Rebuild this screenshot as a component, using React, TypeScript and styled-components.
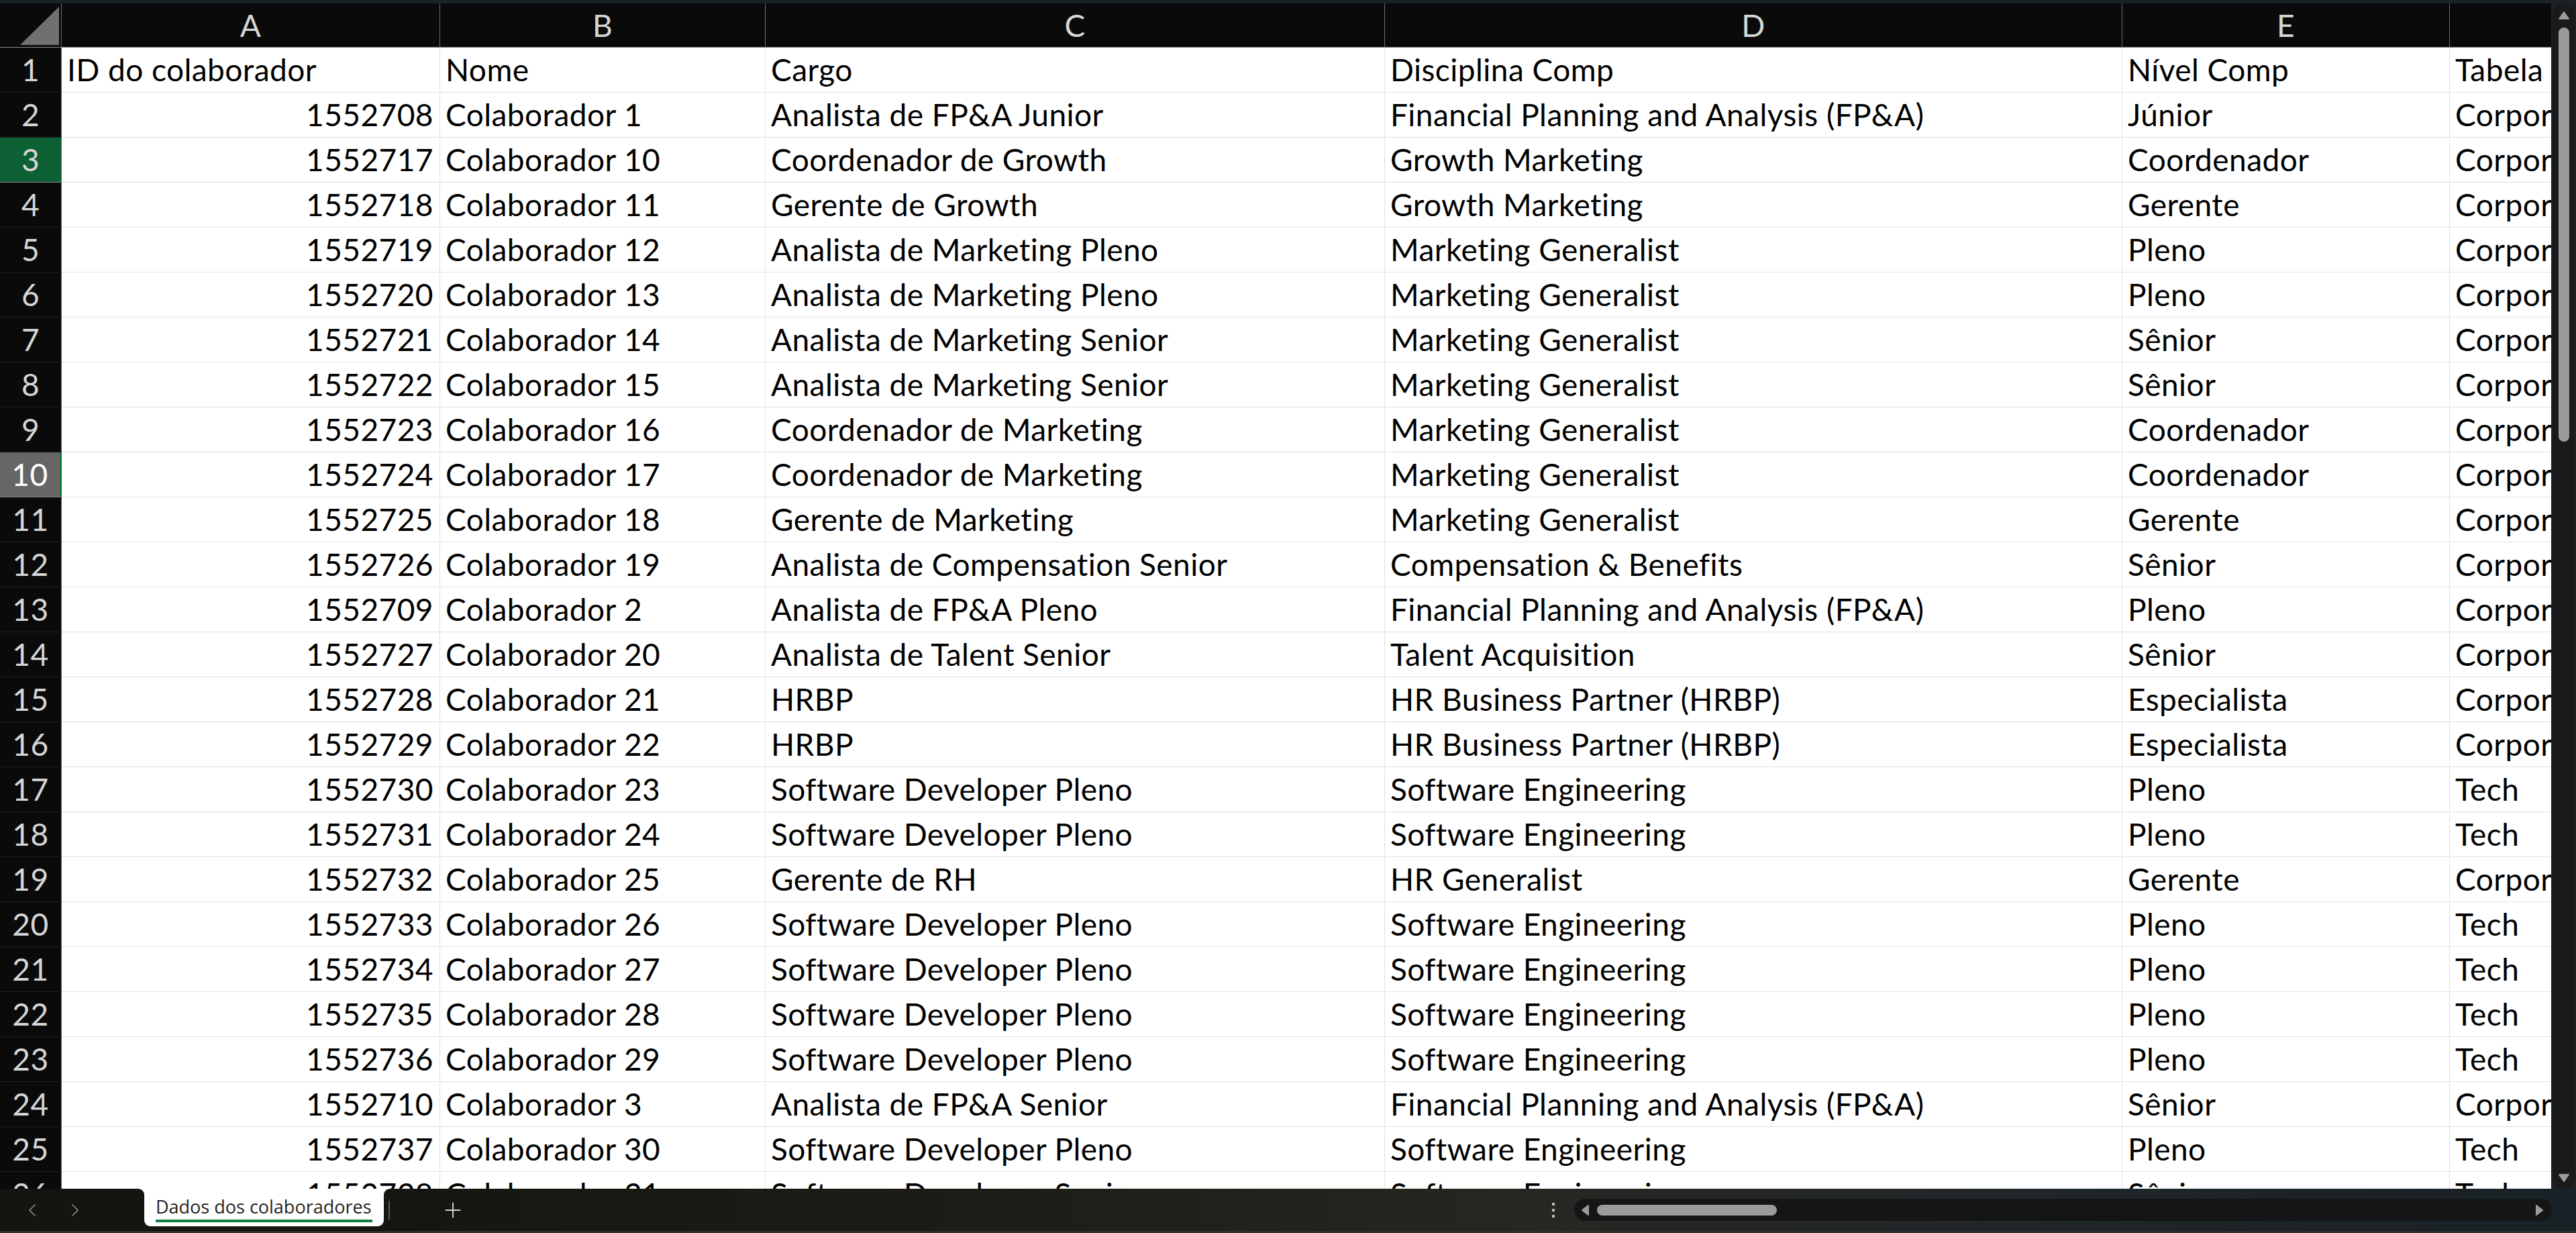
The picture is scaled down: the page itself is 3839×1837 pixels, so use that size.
import React from "react";
import styled, { createGlobalStyle } from "styled-components";
import { ChevronLeft, ChevronRight, Plus } from "lucide-react";

const GlobalStyle = createGlobalStyle`
  html, body {
    margin: 0;
    padding: 0;
    background: #1a2125;
    overflow: hidden;
  }
  #root {
    width: 3839px;
    height: 1837px;
  }
`;

type RowState = "normal" | "active" | "selected";

const COLUMNS = ["A", "B", "C", "D", "E", "F"];

const HEADERS = [
  "ID do colaborador",
  "Nome",
  "Cargo",
  "Disciplina Comp",
  "Nível Comp",
  "Tabela Salarial",
];

const ROWS: string[][] = [
  ["1552708", "Colaborador 1", "Analista de FP&A Junior", "Financial Planning and Analysis (FP&A)", "Júnior", "Corporate"],
  ["1552717", "Colaborador 10", "Coordenador de Growth", "Growth Marketing", "Coordenador", "Corporate"],
  ["1552718", "Colaborador 11", "Gerente de Growth", "Growth Marketing", "Gerente", "Corporate"],
  ["1552719", "Colaborador 12", "Analista de Marketing Pleno", "Marketing Generalist", "Pleno", "Corporate"],
  ["1552720", "Colaborador 13", "Analista de Marketing Pleno", "Marketing Generalist", "Pleno", "Corporate"],
  ["1552721", "Colaborador 14", "Analista de Marketing Senior", "Marketing Generalist", "Sênior", "Corporate"],
  ["1552722", "Colaborador 15", "Analista de Marketing Senior", "Marketing Generalist", "Sênior", "Corporate"],
  ["1552723", "Colaborador 16", "Coordenador de Marketing", "Marketing Generalist", "Coordenador", "Corporate"],
  ["1552724", "Colaborador 17", "Coordenador de Marketing", "Marketing Generalist", "Coordenador", "Corporate"],
  ["1552725", "Colaborador 18", "Gerente de Marketing", "Marketing Generalist", "Gerente", "Corporate"],
  ["1552726", "Colaborador 19", "Analista de Compensation Senior", "Compensation & Benefits", "Sênior", "Corporate"],
  ["1552709", "Colaborador 2", "Analista de FP&A Pleno", "Financial Planning and Analysis (FP&A)", "Pleno", "Corporate"],
  ["1552727", "Colaborador 20", "Analista de Talent Senior", "Talent Acquisition", "Sênior", "Corporate"],
  ["1552728", "Colaborador 21", "HRBP", "HR Business Partner (HRBP)", "Especialista", "Corporate"],
  ["1552729", "Colaborador 22", "HRBP", "HR Business Partner (HRBP)", "Especialista", "Corporate"],
  ["1552730", "Colaborador 23", "Software Developer Pleno", "Software Engineering", "Pleno", "Tech"],
  ["1552731", "Colaborador 24", "Software Developer Pleno", "Software Engineering", "Pleno", "Tech"],
  ["1552732", "Colaborador 25", "Gerente de RH", "HR Generalist", "Gerente", "Corporate"],
  ["1552733", "Colaborador 26", "Software Developer Pleno", "Software Engineering", "Pleno", "Tech"],
  ["1552734", "Colaborador 27", "Software Developer Pleno", "Software Engineering", "Pleno", "Tech"],
  ["1552735", "Colaborador 28", "Software Developer Pleno", "Software Engineering", "Pleno", "Tech"],
  ["1552736", "Colaborador 29", "Software Developer Pleno", "Software Engineering", "Pleno", "Tech"],
  ["1552710", "Colaborador 3", "Analista de FP&A Senior", "Financial Planning and Analysis (FP&A)", "Sênior", "Corporate"],
  ["1552737", "Colaborador 30", "Software Developer Pleno", "Software Engineering", "Pleno", "Tech"],
  ["1552738", "Colaborador 31", "Software Developer Senior", "Software Engineering", "Sênior", "Tech"],
];

const Window = styled.div`
  width: 3839px;
  height: 1837px;
  display: flex;
  flex-direction: column;
  background: #1a2125;
  overflow: hidden;
`;

const TopStrip = styled.div`
  height: 5px;
  flex: none;
  background: #1a2226;
`;

const Main = styled.div`
  display: flex;
  height: 1766px;
  flex: none;
`;

const Sheet = styled.div`
  width: 3802px;
  height: 100%;
  overflow: hidden;
  background: #fff;
  flex: none;
`;

const Grid = styled.div`
  display: grid;
  grid-template-columns: 92px 564px 485px 923px 1099px 488px 520px;
  grid-template-rows: 66px;
  grid-auto-rows: 67px;
  font-family: Lato, "Liberation Sans", sans-serif;
  font-size: 46px;
  line-height: 46px;
  letter-spacing: 0.45px;
`;

const Corner = styled.div`
  box-sizing: border-box;
  background: #0a0a0a;
  border-right: 1px solid #6b6b6b;
  border-bottom: 1px solid #8c8c8c;
  display: flex;
  align-items: flex-end;
  justify-content: flex-end;
  padding: 0 3px 3px 0;
`;

const CornerTriangle = styled.div`
  width: 58px;
  height: 57px;
  background: #707070;
  clip-path: polygon(100% 0, 100% 100%, 0 100%);
`;

const ColHeader = styled.div`
  box-sizing: border-box;
  background: #0a0a0a;
  color: #d6d6d6;
  border-right: 1px solid #6e6e6e;
  border-bottom: 1px solid #8c8c8c;
  text-align: center;
  padding-top: 10px;
`;

const RowHeader = styled.div<{ $state: RowState }>`
  box-sizing: border-box;
  text-align: center;
  padding-top: 10px;
  background: ${(p) =>
    p.$state === "active" ? "#0d6034" : p.$state === "selected" ? "#666666" : "#0a0a0a"};
  color: ${(p) => (p.$state === "selected" ? "#ffffff" : "#d6d6d6")};
  border-bottom: 1px solid
    ${(p) => (p.$state === "normal" ? "#1e1e1e" : "#8a8a8a")};
  border-right: ${(p) =>
    p.$state === "selected" ? "3px solid #107c41" : "1px solid #6b6b6b"};
`;

const Cell = styled.div<{ $num?: boolean }>`
  box-sizing: border-box;
  color: #000;
  white-space: nowrap;
  overflow: hidden;
  border-right: 1px solid #e1e1e1;
  border-bottom: 1px solid #e1e1e1;
  padding: 10px 9px 0 8px;
  text-align: ${(p) => (p.$num ? "right" : "left")};
`;

const VScroll = styled.div`
  flex: 1;
  padding: 0 2px 0 2px;
  display: flex;
`;

const VTrack = styled.div`
  flex: 1;
  background: #1a1a1a;
  border-radius: 17px;
  display: flex;
  flex-direction: column;
  align-items: center;
  padding: 10px 0 8px;
`;

const VThumb = styled.div`
  width: 16px;
  height: 617px;
  margin-top: 10px;
  border-radius: 8px;
  background: #9b9b9b;
`;

const Spacer = styled.div`
  flex: 1;
`;

const TabBar = styled.div`
  height: 66px;
  flex: none;
  display: flex;
  flex-direction: column;
`;

const TabRow = styled.div`
  flex: 1;
  display: flex;
  background: linear-gradient(180deg, #fff 0, #fff 24px, #141510 24px);
`;

const NavArea = styled.div`
  width: 215px;
  flex: none;
  background: #141510;
  border-top-right-radius: 9px;
  display: flex;
  align-items: center;
  padding-left: 32px;
  gap: 32px;
  box-sizing: border-box;
  color: #8c8c8c;
`;

const SheetTab = styled.div`
  width: 357px;
  flex: none;
  height: 56px;
  background: #fff;
  border-radius: 0 0 9px 9px;
  box-sizing: border-box;
  padding: 9px 17px 0;
`;

const TabLabel = styled.div`
  font-family: "Open Sans", "Noto Sans", sans-serif;
  font-size: 27px;
  line-height: 36px;
  color: #242424;
  white-space: nowrap;
  border-bottom: 4px solid #107c41;
  padding-bottom: 1px;
`;

const RestArea = styled.div`
  flex: 1;
  background: linear-gradient(
    90deg,
    #15160f 0%,
    #1c1c17 25%,
    #272722 52%,
    #20262a 76%,
    #182125 100%
  );
  border-top-left-radius: 9px;
  display: flex;
  align-items: center;
  padding-right: 36px;
`;

const Divider = styled.div`
  width: 2px;
  height: 28px;
  margin-left: 7px;
  background: #5a5a5a;
`;

const AddButton = styled.div`
  margin-left: 76px;
  color: #d0d0d0;
  display: flex;
`;

const Dots = styled.div`
  display: flex;
  flex-direction: column;
  gap: 5px;
  margin-left: auto;
  margin-right: 29px;
`;

const Dot = styled.div`
  width: 4px;
  height: 4px;
  background: #bdbdbd;
`;

const HTrack = styled.div`
  width: 1457px;
  height: 33px;
  border-radius: 17px;
  background: #151515;
  display: flex;
  align-items: center;
  padding: 0 12px 0 10px;
  box-sizing: border-box;
`;

const HThumb = styled.div`
  width: 268px;
  height: 16px;
  margin-left: 11px;
  border-radius: 8px;
  background: #9b9b9b;
`;

const BottomEdge = styled.div`
  height: 3px;
  background: #2f2f2f;
`;

const Triangle = ({ dir }: { dir: "up" | "down" | "left" | "right" }) => {
  const pts = {
    up: "2,13 9,3 16,13",
    down: "2,3 9,13 16,3",
    left: "11,1 2,8 11,15",
    right: "2,1 11,8 2,15",
  }[dir];
  const horiz = dir === "left" || dir === "right";
  return (
    <svg width={horiz ? 13 : 18} height={16} viewBox={horiz ? "0 0 13 16" : "0 0 18 16"}>
      <polygon points={pts} fill="#9b9b9b" stroke="#9b9b9b" strokeWidth="2" strokeLinejoin="round" />
    </svg>
  );
};

const rowState = (n: number): RowState =>
  n === 3 ? "active" : n === 10 ? "selected" : "normal";

export default function App() {
  return (
    <>
      <GlobalStyle />
      <Window>
        <TopStrip />
        <Main>
          <Sheet>
            <Grid>
              <Corner>
                <CornerTriangle />
              </Corner>
              {COLUMNS.map((c) => (
                <ColHeader key={c}>{c}</ColHeader>
              ))}

              <RowHeader $state={rowState(1)}>1</RowHeader>
              {HEADERS.map((h) => (
                <Cell key={h}>{h}</Cell>
              ))}

              {ROWS.map((row, i) => (
                <React.Fragment key={row[0]}>
                  <RowHeader $state={rowState(i + 2)}>{i + 2}</RowHeader>
                  {row.map((v, j) => (
                    <Cell key={j} $num={j === 0}>
                      {v}
                    </Cell>
                  ))}
                </React.Fragment>
              ))}
            </Grid>
          </Sheet>
          <VScroll>
            <VTrack>
              <Triangle dir="up" />
              <VThumb />
              <Spacer />
              <Triangle dir="down" />
            </VTrack>
          </VScroll>
        </Main>
        <TabBar>
          <TabRow>
            <NavArea>
              <ChevronLeft size={32} strokeWidth={1.3} />
              <ChevronRight size={32} strokeWidth={1.3} />
            </NavArea>
            <SheetTab>
              <TabLabel>Dados dos colaboradores</TabLabel>
            </SheetTab>
            <RestArea>
              <Divider />
              <AddButton>
                <Plus size={36} strokeWidth={1.3} />
              </AddButton>
              <Dots>
                <Dot />
                <Dot />
                <Dot />
              </Dots>
              <HTrack>
                <Triangle dir="left" />
                <HThumb />
                <Spacer />
                <Triangle dir="right" />
              </HTrack>
            </RestArea>
          </TabRow>
          <BottomEdge />
        </TabBar>
      </Window>
    </>
  );
}
